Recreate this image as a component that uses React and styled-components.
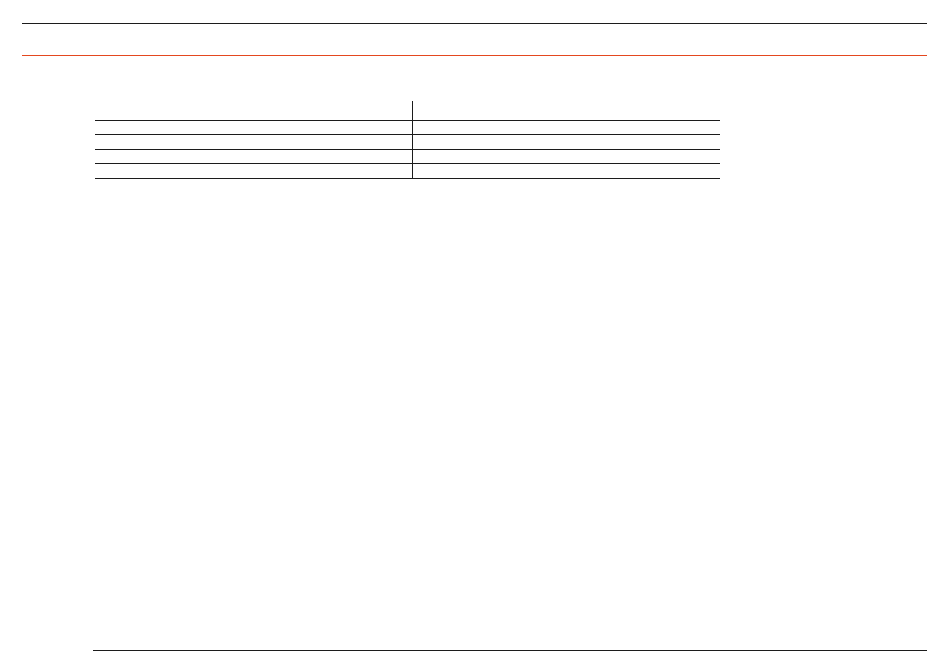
import React from "react";
import styled, { createGlobalStyle } from "styled-components";

const Global = createGlobalStyle`
  html, body { margin: 0; padding: 0; background: #ffffff; }
  body { font-family: "Liberation Sans", Arial, sans-serif; }
`;

const Page = styled.div`
  display: flex;
  flex-direction: column;
  height: 660px;
  box-sizing: border-box;
  padding-top: 23px;
  padding-bottom: 9px;
`;

const Header = styled.header`
  margin: 0 23px 0 22px;
  height: 33px;
  box-sizing: border-box;
  border-top: 1px solid #1c1c1c;
  border-bottom: 1px solid #e4481f;
`;

const Table = styled.div`
  display: grid;
  grid-template-columns: 318px 307px;
  width: 625px;
  margin: 45px 0 0 95px;
`;

const Cell = styled.div`
  box-sizing: border-box;
  height: ${(p) => (p.$head ? "20px" : "14.4px")};
  border-bottom: 1px solid #1c1c1c;
  border-right: ${(p) => (p.$left ? "1px solid #1c1c1c" : "none")};
`;

const Footer = styled.footer`
  margin: auto 23px 0 93px;
  border-top: 1px solid #1c1c1c;
`;

const rows = [0, 1, 2, 3];

export default function App() {
  return (
    <>
      <Global />
      <Page>
        <Header />
        <Table>
          <Cell $head $left />
          <Cell $head />
          {rows.map((r) => (
            <React.Fragment key={r}>
              <Cell $left />
              <Cell />
            </React.Fragment>
          ))}
        </Table>
        <Footer />
      </Page>
    </>
  );
}
